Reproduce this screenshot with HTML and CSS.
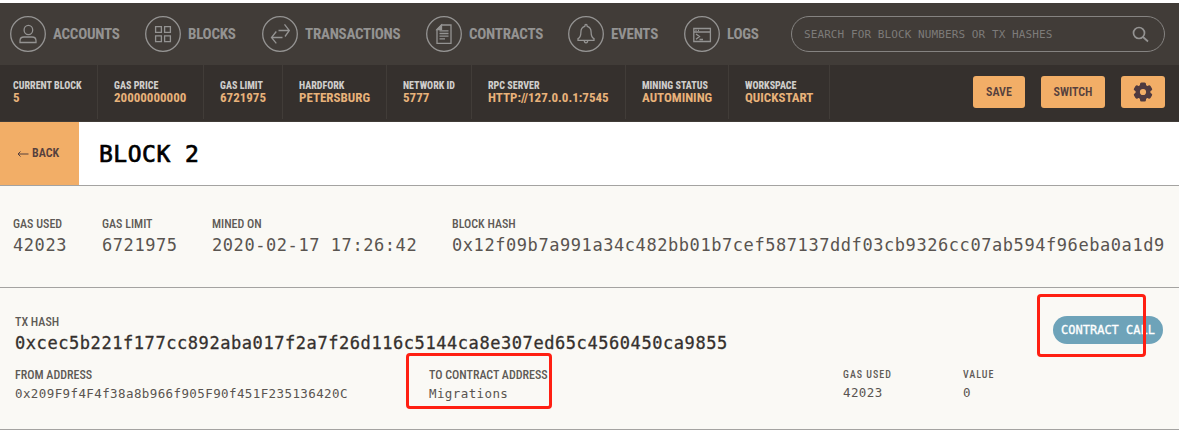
FILE: index.html
```html
<!DOCTYPE html>
<html lang="en">
<head>
<meta charset="utf-8">
<title>Block 2</title>
<link rel="stylesheet" href="styles.css">
</head>
<body>
<nav class="nav">
  <a class="nav-item accounts"><svg class="nav-icon" viewBox="0 0 36 36"><circle cx="18" cy="18" r="17.3"/><ellipse cx="18.4" cy="14" rx="4.3" ry="4.7"/><path d="M10 26.5v-1.700q0-3.800 4-3.800h8q4 0 4 3.800v1.700z"/></svg><span>ACCOUNTS</span></a>
  <a class="nav-item blocks"><svg class="nav-icon" viewBox="0 0 36 36"><circle cx="18" cy="18" r="17.3"/><path d="M10.600 10.600h5.800v5.800h-5.800zM19.600 10.600h5.800v5.800h-5.800zM10.600 19.900h5.800v5.800h-5.800zM19.600 19.900h5.800v5.800h-5.800z"/></svg><span>BLOCKS</span></a>
  <a class="nav-item transactions"><svg class="nav-icon" viewBox="0 0 36 36"><circle cx="18" cy="18" r="17.300"/><path d="M16.500 14.500h10.500M22.500 8.300l4.800 6.200-4.300 6M20.500 21.500h-11M14.300 15.500l-4.800 6 4.800 5.800"/></svg><span>TRANSACTIONS</span></a>
  <a class="nav-item contracts"><svg class="nav-icon" viewBox="0 0 36 36"><circle cx="18" cy="18" r="17.300"/><path d="M15.500 9h9.500v18.300h-14V13.500z"/><path class="fold" d="M15.500 9v4.500h-4.500z"/><path d="M13.500 14.800h9M13.500 17.500h9M13.500 20.200h9M13.500 22.900h5.500"/></svg><span>CONTRACTS</span></a>
  <a class="nav-item events"><svg class="nav-icon" viewBox="0 0 36 36"><circle cx="18" cy="18" r="17.300"/><path d="M16.800 10.300q0-1.800 1.200-1.800t1.200 1.800c2.800.7 3.900 2.900 3.900 5.700 0 4 .8 5.700 2.900 6.700v1.600H10v-1.600c2.100-1 2.900-2.700 2.900-6.700 0-2.800 1.100-5 3.900-5.700zM16.300 24.500q0 2.300 1.700 2.300t1.700-2.300"/></svg><span>EVENTS</span></a>
  <a class="nav-item logs"><svg class="nav-icon" viewBox="0 0 36 36"><circle cx="18" cy="18" r="17.300"/><path d="M9.800 12.500h16.600v13H9.800zM9.800 16h16.600M11.500 14.300h1M14 14.300h1M12 18l3.500 2.600-3.500 2.600M15.500 23.500h3.500"/></svg><span>LOGS</span></a>
  <div class="search"><span>SEARCH FOR BLOCK NUMBERS OR TX HASHES</span><svg class="search-icon" viewBox="0 0 17 17"><circle cx="7" cy="7" r="5.500"/><path d="M11 11l5 4.500"/></svg></div>
</nav>
<section class="status">
  <div class="stat s1"><b>CURRENT BLOCK</b><strong>5</strong></div>
  <div class="stat s2"><b>GAS PRICE</b><strong>20000000000</strong></div>
  <div class="stat s3"><b>GAS LIMIT</b><strong>6721975</strong></div>
  <div class="stat s4"><b>HARDFORK</b><strong>PETERSBURG</strong></div>
  <div class="stat s5"><b>NETWORK ID</b><strong>5777</strong></div>
  <div class="stat s6"><b>RPC SERVER</b><strong>HTTP://127.0.0.1:7545</strong></div>
  <div class="stat s7"><b>MINING STATUS</b><strong>AUTOMINING</strong></div>
  <div class="stat s8"><b>WORKSPACE</b><strong>QUICKSTART</strong></div>
  <div class="actions">
    <button class="btn save">SAVE</button>
    <button class="btn switch">SWITCH</button>
    <button class="btn settings" aria-label="Settings"><svg class="gear" viewBox="0 0 20 20"><g><rect x="7" y="0.500" width="6" height="19" rx="1.500"/><rect x="7" y="0.500" width="6" height="19" rx="1.500" transform="rotate(60 10 10)"/><rect x="7" y="0.500" width="6" height="19" rx="1.500" transform="rotate(120 10 10)"/><circle cx="10" cy="10" r="7.500"/></g><circle class="gear-hole" cx="10" cy="10" r="3.100"/></svg></button>
  </div>
</section>
<header class="title">
  <a class="back"><svg class="arrow" viewBox="0 0 12 8"><path d="M11.500 5.500H1M3.500 3L1 5.500l2.500 2.500"/></svg>BACK</a>
  <h1>BLOCK 2</h1>
</header>
<section class="block">
  <div class="field f1"><span class="label">GAS USED</span><span class="value">42023</span></div>
  <div class="field f2"><span class="label">GAS LIMIT</span><span class="value">6721975</span></div>
  <div class="field f3"><span class="label">MINED ON</span><span class="value">2020-02-17 17:26:42</span></div>
  <div class="field"><span class="label">BLOCK HASH</span><span class="value">0x12f09b7a991a34c482bb01b7cef587137ddf03cb9326cc07ab594f96eba0a1d9</span></div>
</section>
<section class="tx">
  <div class="tx-top">
    <div class="field"><span class="label">TX HASH</span><span class="value hash">0xcec5b221f177cc892aba017f2a7f26d116c5144ca8e307ed65c4560450ca9855</span></div>
    <span class="pill">CONTRACT CALL</span>
  </div>
  <div class="tx-row">
    <div class="field from"><span class="label">FROM ADDRESS</span><span class="small">0x209F9f4F4f38a8b966f905F90f451F235136420C</span></div>
    <div class="field to"><span class="label">TO CONTRACT ADDRESS</span><span class="small">Migrations</span></div>
    <div class="field gas"><span class="label tiny">GAS USED</span><span class="small">42023</span></div>
    <div class="field"><span class="label tiny">VALUE</span><span class="small">0</span></div>
  </div>
</section>
<div class="mark mark-contract"></div>
<div class="mark mark-call"></div>
</body>
</html>
```
FILE: styles.css
```css
* { box-sizing: border-box; }
body { margin: 0; padding-top: 3px; width: 1179px; height: 435px; overflow: hidden; position: relative; background: #fff; font-family: "Roboto Condensed", Roboto, sans-serif; font-stretch: 75%; }
.nav { display: flex; align-items: center; height: 62px; padding-left: 10px; background: #413c38; }
.nav-item { display: flex; align-items: center; gap: 7px; color: #949392; font-size: 15px; font-weight: 700; letter-spacing: -.25px; white-space: nowrap; }
.accounts { width: 135px; } .blocks { width: 117px; } .transactions { width: 164px; }
.contracts { width: 142px; } .events { width: 116px; } .logs { width: 107px; }
.nav-icon { width: 36px; height: 36px; flex: none; fill: none; stroke: #949392; stroke-width: 1.300; }
.fold { fill: #949392; }
.search { display: flex; align-items: center; justify-content: space-between; width: 374px; height: 36px; padding: 0 15px 0 12px; border: 1px solid #858381; border-radius: 18px; color: #7d7b79; font: 11px "DejaVu Sans Mono", monospace; letter-spacing: .09px; white-space: nowrap; }
.search-icon { width: 17px; height: 17px; fill: none; stroke: #949392; stroke-width: 1.700; }
.status { display: flex; height: 57px; padding-bottom: 2px; background: #35302d; border-bottom: 1px solid #413c38; }
.stat { display: flex; flex-direction: column; padding: 15px 0 0 16px; border-right: 1px solid #413c38; white-space: nowrap; }
.stat b { color: #cfcdcb; font-size: 10px; font-weight: 800; line-height: 12px; }
.stat strong { color: #e8b27a; font-size: 13px; line-height: 12px; }
.s1 { width: 98px; padding-left: 13px; } .s2 { width: 106px; } .s3 { width: 79px; } .s4 { width: 104px; }
.s5 { width: 85px; } .s6 { width: 154px; } .s7 { width: 103px; } .s8 { width: 101px; }
.actions { display: flex; gap: 16px; margin-left: auto; padding: 11px 14px 0 0; }
.btn { display: flex; align-items: center; justify-content: center; height: 32px; padding: 0; border: 0; border-radius: 3px; background: #f2ae67; color: #56403d; font: 600 12px "Roboto Condensed", Roboto, sans-serif; font-stretch: 75%; }
.save { width: 52px; } .switch { width: 64px; } .settings { width: 44px; }
.gear { width: 20px; height: 20px; fill: #4e3a40; }
.gear-hole { fill: #f2ae67; }
.title { display: flex; height: 64px; border-bottom: 1px solid #a4a3a1; background: #fff; }
.back { display: flex; align-items: center; gap: 3px; width: 79px; padding: 0 0 2px 17px; background: #f2ae67; color: #56403d; font-size: 12px; font-weight: 600; }
.arrow { width: 12px; height: 9px; fill: none; stroke: #56403d; }
h1 { margin: 0 0 0 20px; padding-top: 1px; font: 400 23px/63px "DejaVu Sans Mono", monospace; letter-spacing: .5px; color: #000; -webkit-text-stroke: .7px #000; }
.block { display: flex; height: 102px; padding: 31px 0 0 13px; background: #faf9f5; border-bottom: 1px solid #a4a3a1; }
.field { display: flex; flex-direction: column; align-items: flex-start; white-space: nowrap; }
.f1 { width: 89px; } .f2 { width: 110px; } .f3 { width: 240px; }
.label { color: #5e5a56; font-size: 12px; font-weight: 500; line-height: 14px; }
.value { color: #595450; font: 17px/28px "DejaVu Sans Mono", monospace; letter-spacing: .565px; }
.tx { height: 142px; padding: 27px 16px 0 15px; background: #faf9f5; border-bottom: 1px solid #a4a3a1; }
.tx-top { display: flex; justify-content: space-between; height: 53px; }
.hash { color: #35302d; -webkit-text-stroke: .3px #35302d; }
.pill { height: 28px; width: 110px; margin-top: 1px; border-radius: 14px; background: #6ea3b9; color: #fff; text-align: center; font: 500 12px/28px "DejaVu Sans Mono", monospace; -webkit-text-stroke: .3px #fff; }
.tx-row { display: flex; }
.small { color: #595450; font: 12.500px/24px "DejaVu Sans Mono", monospace; letter-spacing: .4px; }
.from { width: 414px; } .to { width: 414px; } .gas { width: 120px; }
.tiny { padding-top: 1px; font-size: 10px; letter-spacing: 1px; line-height: 12px; }
.mark { position: absolute; border: 3px solid #ff1f12; border-radius: 4px; }
.mark-contract { left: 406px; top: 353px; width: 146px; height: 56px; }
.mark-call { left: 1037px; top: 294px; width: 109px; height: 63px; }
```
